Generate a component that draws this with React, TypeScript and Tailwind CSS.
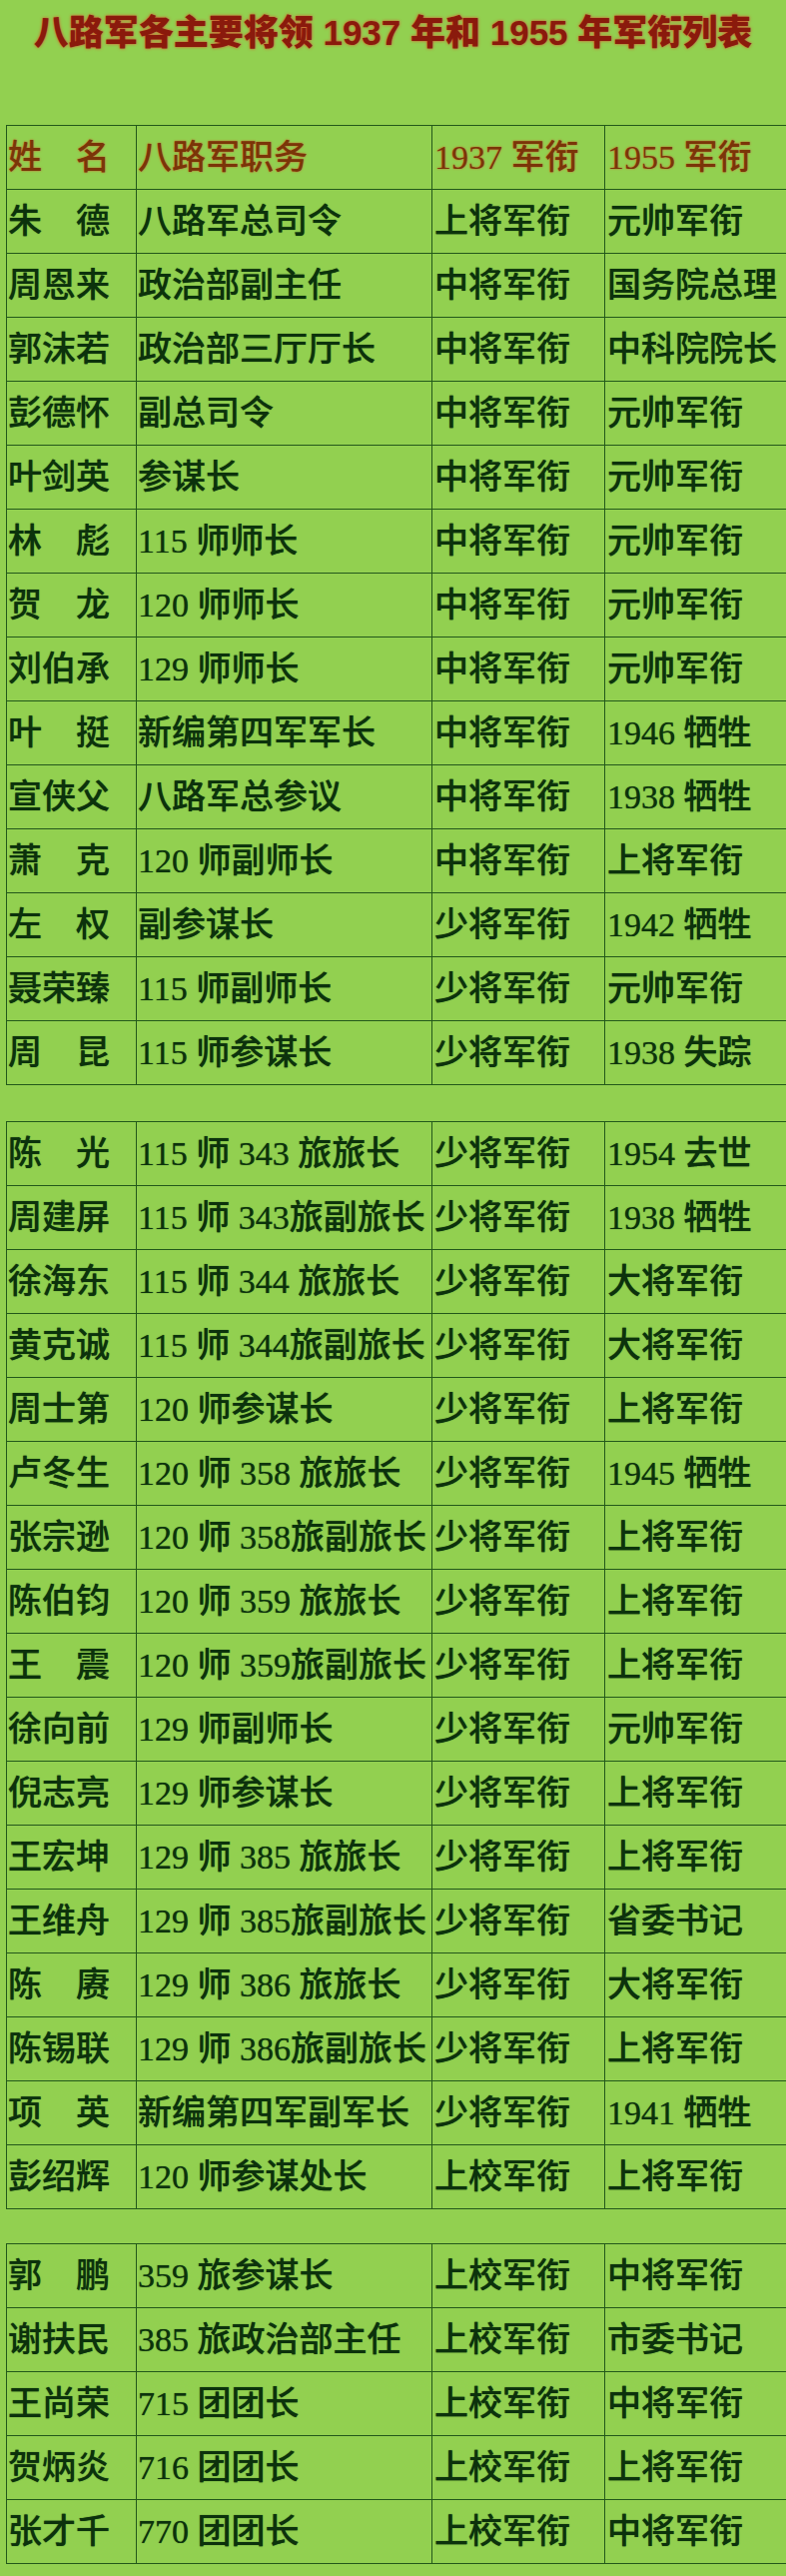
// App.tsx
type Row = [string, string, string, string]

const header: Row = ["姓　名", "八路军职务", "1937 军衔", "1955 军衔"]

const tableOne: Row[] = [
  ["朱　德", "八路军总司令", "上将军衔", "元帅军衔"],
  ["周恩来", "政治部副主任", "中将军衔", "国务院总理"],
  ["郭沫若", "政治部三厅厅长", "中将军衔", "中科院院长"],
  ["彭德怀", "副总司令", "中将军衔", "元帅军衔"],
  ["叶剑英", "参谋长", "中将军衔", "元帅军衔"],
  ["林　彪", "115 师师长", "中将军衔", "元帅军衔"],
  ["贺　龙", "120 师师长", "中将军衔", "元帅军衔"],
  ["刘伯承", "129 师师长", "中将军衔", "元帅军衔"],
  ["叶　挺", "新编第四军军长", "中将军衔", "1946 牺牲"],
  ["宣侠父", "八路军总参议", "中将军衔", "1938 牺牲"],
  ["萧　克", "120 师副师长", "中将军衔", "上将军衔"],
  ["左　权", "副参谋长", "少将军衔", "1942 牺牲"],
  ["聂荣臻", "115 师副师长", "少将军衔", "元帅军衔"],
  ["周　昆", "115 师参谋长", "少将军衔", "1938 失踪"],
]

const tableTwo: Row[] = [
  ["陈　光", "115 师 343 旅旅长", "少将军衔", "1954 去世"],
  ["周建屏", "115 师 343旅副旅长", "少将军衔", "1938 牺牲"],
  ["徐海东", "115 师 344 旅旅长", "少将军衔", "大将军衔"],
  ["黄克诚", "115 师 344旅副旅长", "少将军衔", "大将军衔"],
  ["周士第", "120 师参谋长", "少将军衔", "上将军衔"],
  ["卢冬生", "120 师 358 旅旅长", "少将军衔", "1945 牺牲"],
  ["张宗逊", "120 师 358旅副旅长", "少将军衔", "上将军衔"],
  ["陈伯钧", "120 师 359 旅旅长", "少将军衔", "上将军衔"],
  ["王　震", "120 师 359旅副旅长", "少将军衔", "上将军衔"],
  ["徐向前", "129 师副师长", "少将军衔", "元帅军衔"],
  ["倪志亮", "129 师参谋长", "少将军衔", "上将军衔"],
  ["王宏坤", "129 师 385 旅旅长", "少将军衔", "上将军衔"],
  ["王维舟", "129 师 385旅副旅长", "少将军衔", "省委书记"],
  ["陈　赓", "129 师 386 旅旅长", "少将军衔", "大将军衔"],
  ["陈锡联", "129 师 386旅副旅长", "少将军衔", "上将军衔"],
  ["项　英", "新编第四军副军长", "少将军衔", "1941 牺牲"],
  ["彭绍辉", "120 师参谋处长", "上校军衔", "上将军衔"],
]

const tableThree: Row[] = [
  ["郭　鹏", "359 旅参谋长", "上校军衔", "中将军衔"],
  ["谢扶民", "385 旅政治部主任", "上校军衔", "市委书记"],
  ["王尚荣", "715 团团长", "上校军衔", "中将军衔"],
  ["贺炳炎", "716 团团长", "上校军衔", "上将军衔"],
  ["张才千", "770 团团长", "上校军衔", "中将军衔"],
]

function TableRow({ row, isHeader }: { row: Row; isHeader?: boolean }) {
  const text = isHeader
    ? "text-[#7a3508] [text-shadow:0_0_2px_#d2552a]"
    : "text-[#0c320c] [text-shadow:0_0_1px_#2c5a1c]"

  return (
    <div className={`flex h-[64px] border-b border-[#22581a] ${text}`}>
      <div className="w-[130px] shrink-0 flex items-center pl-[1px] border-r border-[#22581a] whitespace-nowrap overflow-hidden">
        {row[0]}
      </div>
      <div className="w-[296px] shrink-0 flex items-center pl-[1px] border-r border-[#22581a] whitespace-nowrap overflow-hidden">
        {row[1]}
      </div>
      <div className="w-[173px] shrink-0 flex items-center pl-[2px] border-r border-[#22581a] whitespace-nowrap overflow-hidden">
        {row[2]}
      </div>
      <div className="flex-1 flex items-center pl-[2px] whitespace-nowrap overflow-hidden">
        {row[3]}
      </div>
    </div>
  )
}

function Table({ rows, withHeader, className }: { rows: Row[]; withHeader?: boolean; className?: string }) {
  return (
    <div className={`ml-[6px] w-[820px] border-t border-l border-[#22581a] ${className ?? ""}`}>
      {withHeader && <TableRow row={header} isHeader />}
      {rows.map((row) => (
        <TableRow key={row[0]} row={row} />
      ))}
    </div>
  )
}

export default function App() {
  return (
    <div className="w-[787px] h-[2578px] overflow-hidden bg-[#92d050]">
      {/* Title */}
      <div className="h-[125px] pt-[10px]">
        <h1 className="text-center text-[35px] leading-[46px] font-black whitespace-nowrap text-[#8a1a0c] [text-shadow:0_0_3px_#e2452c] [font-family:'Liberation_Sans','Noto_Sans_CJK_SC',sans-serif]">
          八路军各主要将领 1937 年和 1955 年军衔列表
        </h1>
      </div>

      {/* Tables */}
      <div className="text-[34px] leading-none font-medium [font-family:'Liberation_Serif','Noto_Sans_CJK_SC',serif]">
        <Table rows={tableOne} withHeader />
        <Table rows={tableTwo} className="mt-[36px]" />
        <Table rows={tableThree} className="mt-[34px]" />
      </div>
    </div>
  )
}
